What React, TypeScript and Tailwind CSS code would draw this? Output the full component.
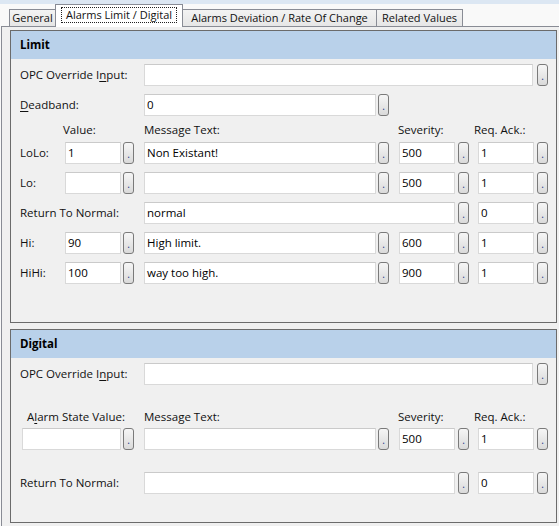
import React from "react";

function Btn({ className = "" }: { className?: string }) {
  return (
    <div
      className={
        "w-[11px] h-[22px] shrink-0 rounded-[3px] border border-[#7a7a7a] bg-linear-to-b from-[#f6f6f6] to-[#dadada] flex justify-center items-end pb-[4px] text-[10px] leading-none text-[#1a3a8a] " +
        className
      }
    >
      .
    </div>
  );
}

function Inp({ className = "", value = "" }: { className?: string; value?: string }) {
  return (
    <div
      className={
        "h-[22px] shrink-0 bg-white border border-[#d9d9d9] border-t-[#cacaca] pl-[2px] flex items-center text-black " +
        className
      }
    >
      {value}
    </div>
  );
}

function Tab({ className = "", children }: { className?: string; children: React.ReactNode }) {
  return <div className={"flex items-center justify-center shrink-0 text-[11px] " + className}>{children}</div>;
}

function AlarmRow({
  label,
  v,
  msg,
  sev,
  ack,
  className = "",
}: {
  label: string;
  v: string;
  msg: string;
  sev: string;
  ack: string;
  className?: string;
}) {
  return (
    <div className={"flex items-center h-[22px] " + className}>
      <div className="w-[45px] shrink-0">{label}</div>
      <Inp className="w-[56px]" value={v} />
      <Btn className="ml-[2px]" />
      <Inp className="ml-[10px] w-[232px]" value={msg} />
      <Btn className="ml-[2px]" />
      <Inp className="ml-[10px] w-[56px]" value={sev} />
      <Btn className="ml-[3px]" />
      <Inp className="ml-[9px] w-[56px]" value={ack} />
      <Btn className="ml-[3px]" />
    </div>
  );
}

export default function App() {
  return (
    <div className="w-[559px] h-[526px] overflow-hidden bg-[#f9f9f9] flex flex-col font-['Open_Sans','Segoe_UI',sans-serif] text-[11.5px] text-[#111]">
      <div className="h-[4px] bg-[#dce7f3] shrink-0" />
      {/* tabs */}
      <div className="h-[22px] flex items-end pl-[9px] shrink-0">
        <Tab className="w-[46px] h-[17px] border-l border-t border-[#898c95] bg-linear-to-b from-[#f3f3f3] to-[#e6e6e6] pt-[1px]">
          General
        </Tab>
        <Tab className="w-[128px] border-l border-t border-r border-[#898c95] bg-white relative z-10 -mb-[1px] h-[23px]">
          <span className="border border-dotted border-[#222] px-[4px] h-[16px] leading-[14px] -mt-[2px]">
            Alarms Limit / Digital
          </span>
        </Tab>
        <Tab className="w-[194px] h-[17px] border-t border-r border-[#898c95] bg-linear-to-b from-[#f3f3f3] to-[#e6e6e6] pt-[1px]">
          Alarms Deviation / Rate Of Change
        </Tab>
        <Tab className="w-[86px] h-[17px] border-t border-r border-[#898c95] bg-linear-to-b from-[#f3f3f3] to-[#e6e6e6] pt-[1px]">
          Related Values
        </Tab>
      </div>
      {/* page */}
      <div className="flex-1 ml-[1px] border-l border-t border-[#898c95] bg-[#f0f0f0] pl-[8px] pt-[3px]">
        {/* Limit group */}
        <div className="w-[547px] h-[293px] border border-[#6b6b6b] flex flex-col">
          <div className="h-[28px] bg-[#b9d1ea] pl-[9px] flex items-center font-bold text-black shrink-0">
            Limit
          </div>
          <div className="pl-[9px] pt-[5px] flex flex-col">
            <div className="flex items-center h-[22px]">
              <div className="w-[124px] shrink-0">
                OPC Override I<span className="underline underline-offset-2">n</span>put:
              </div>
              <Inp className="w-[389px]" />
              <Btn className="ml-[4px]" />
            </div>
            <div className="flex items-center h-[22px] mt-[8px]">
              <div className="w-[124px] shrink-0">
                <span className="underline underline-offset-2">D</span>eadband:
              </div>
              <Inp className="w-[232px]" value="0" />
              <Btn className="ml-[2px]" />
            </div>
            <div className="flex items-center h-[20px] mt-[4px]">
              <div className="w-[124px] shrink-0 pl-[43px]">Value:</div>
              <div className="w-[254px] shrink-0">Message Text:</div>
              <div className="w-[76px] shrink-0">Severity:</div>
              <div>Req. Ack.:</div>
            </div>
            <AlarmRow className="mt-[2px]" label="LoLo:" v="1" msg="Non Existant!" sev="500" ack="1" />
            <AlarmRow className="mt-[8px]" label="Lo:" v="" msg="" sev="500" ack="1" />
            <div className="flex items-center h-[22px] mt-[8px]">
              <div className="w-[124px] shrink-0">Return To Normal:</div>
              <Inp className="w-[311px]" value="normal" />
              <Btn className="ml-[3px]" />
              <Inp className="ml-[9px] w-[56px]" value="0" />
              <Btn className="ml-[3px]" />
            </div>
            <AlarmRow className="mt-[8px]" label="Hi:" v="90" msg="High limit." sev="600" ack="1" />
            <AlarmRow className="mt-[8px]" label="HiHi:" v="100" msg="way too high." sev="900" ack="1" />
          </div>
        </div>
        {/* Digital group */}
        <div className="mt-[6px] w-[547px] h-[194px] border border-[#6b6b6b] flex flex-col">
          <div className="h-[28px] bg-[#b9d1ea] pl-[9px] flex items-center font-bold text-black shrink-0">
            Digital
          </div>
          <div className="pl-[9px] pt-[5px] flex flex-col">
            <div className="flex items-center h-[22px]">
              <div className="w-[124px] shrink-0">
                OPC Override I<span className="underline underline-offset-2">n</span>put:
              </div>
              <Inp className="w-[389px]" />
              <Btn className="ml-[4px]" />
            </div>
            <div className="flex items-center h-[20px] mt-[22px]">
              <div className="w-[124px] shrink-0 pl-[7px]">
                A<span className="underline underline-offset-2">l</span>arm State Value:
              </div>
              <div className="w-[254px] shrink-0">Message Text:</div>
              <div className="w-[76px] shrink-0">Severity:</div>
              <div>Req. Ack.:</div>
            </div>
            <div className="flex items-center h-[22px] mt-[1px]">
              <Inp className="ml-[2px] w-[99px]" />
              <Btn className="ml-[2px]" />
              <Inp className="ml-[10px] w-[232px]" />
              <Btn className="ml-[2px]" />
              <Inp className="ml-[10px] w-[56px]" value="500" />
              <Btn className="ml-[3px]" />
              <Inp className="ml-[9px] w-[56px]" value="1" />
              <Btn className="ml-[3px]" />
            </div>
            <div className="flex items-center h-[22px] mt-[22px]">
              <div className="w-[124px] shrink-0">Return To Normal:</div>
              <Inp className="w-[311px]" />
              <Btn className="ml-[3px]" />
              <Inp className="ml-[9px] w-[56px]" value="0" />
              <Btn className="ml-[3px]" />
            </div>
          </div>
        </div>
      </div>
    </div>
  );
}
